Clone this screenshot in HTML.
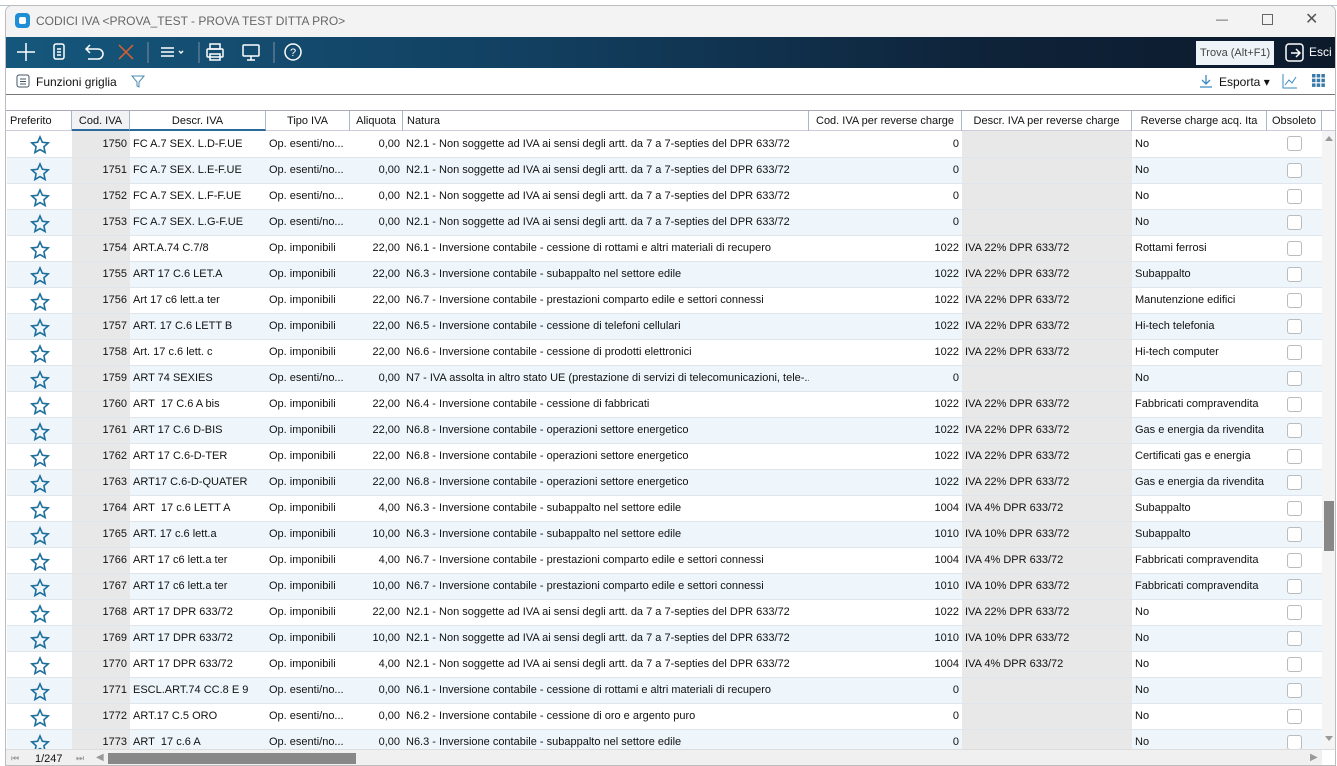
<!DOCTYPE html>
<html><head><meta charset="utf-8">
<style>
*{box-sizing:border-box;margin:0;padding:0}
body{width:1337px;height:766px;overflow:hidden;background:#fff;font-family:"Liberation Sans",sans-serif;font-size:11px;color:#111;position:relative}
.top{position:absolute;left:0;top:0;width:1337px;height:6px;background:#fff;border-bottom:1px solid #b8c4d0}
.win{position:absolute;left:5px;top:5px;width:1331px;height:761px;border:1px solid #bcbcbc;border-radius:7px 7px 0 0;background:#fff;overflow:hidden}
.title{position:absolute;left:0;top:0;width:100%;height:31px;background:#f3f3f3;color:#666;font-size:12px}
.title .t{position:absolute;left:30px;top:8px}
.logo{position:absolute;left:9px;top:7px;width:15px;height:15px;background:#1e8fd6;border-radius:4px}
.logo:after{content:"";position:absolute;left:4px;top:4px;width:7px;height:7px;background:#fff;border-radius:2px}
.tb{position:absolute;left:0;top:31px;width:100%;height:31px;background:linear-gradient(90deg,#15577c 0%,#123f60 40%,#0e2238 75%,#0c1a2c 100%)}
.tb svg{position:absolute}
.trova{position:absolute;left:1190px;top:4px;width:78px;height:24px;background:#eef4f8;color:#444;font-size:11px;padding:6px 0 0 4px;white-space:nowrap;overflow:hidden}
.esci{position:absolute;left:1303px;top:8px;color:#fff;font-size:12px}
.sub{position:absolute;left:0;top:62px;width:100%;height:27px;border-bottom:1px solid #777;font-size:12px}
.hdr{position:absolute;left:0;top:104px;height:21px;width:1331px;border-top:1px solid #aab;border-bottom:1px solid #ccd;background:#fff}
.hdr div{position:absolute;top:0;height:20px;border-right:1px solid #a9b8c8;padding-top:4px;text-align:center;font-size:11px;white-space:nowrap;overflow:hidden}
table{position:absolute;left:1px;top:125px;border-collapse:collapse;table-layout:fixed;width:1315px}
td{height:26px;border-bottom:1px solid #dfe5ea;white-space:nowrap;overflow:hidden;padding:0 3px;font-size:11px}
tr:nth-child(even) td{background:#eef6fc}
td.g{background:#e8e8e8!important}
td.r{text-align:right}
td.c{text-align:center}
td.c svg{vertical-align:middle;margin-top:3px}
.cb{display:inline-block;width:15px;height:15px;border:1px solid #bbb;border-radius:3px;background:#fff;vertical-align:middle}
.sb{position:absolute;left:1316px;top:125px;width:15px;height:618px;background:#f4f4f4}
.bot{position:absolute;left:0;top:743px;width:1331px;height:18px;background:#f0f0f0;border-top:1px solid #ddd}
</style></head><body>
<div class="top"></div>
<div class="win">
<div class="title"><div class="logo"></div><div class="t">CODICI IVA &lt;PROVA_TEST - PROVA TEST DITTA PRO&gt;</div>
<span style="position:absolute;left:1210px;top:6px;color:#555">—</span>
<span style="position:absolute;left:1256px;top:8px;width:11px;height:11px;border:1px solid #666"></span>
<span style="position:absolute;left:1299px;top:3px;font-size:16px;color:#555">✕</span></div>
<div class="tb">
<svg width="300" height="31" viewBox="0 0 300 31" fill="none" stroke="#fff" stroke-width="1.5">
<path d="M20 6v18M11 15h18"/>
<rect x="48" y="7" width="10" height="15" rx="2"/><path d="M51 12h4M51 15h4M51 18h4"/>
<path d="M80 12h12a5 5 0 010 10H82M84 8l-4 4 4 4"/>
<path d="M113 8l14 14M127 8l-14 14" stroke="#e0602c"/>
<path d="M142 5v21" stroke="#5a7a90"/>
<path d="M155 11h13M155 15h13M155 19h13"/><path d="M173 14l2 2 2-2" />
<path d="M193 5v21" stroke="#5a7a90"/>
<rect x="201" y="12" width="16" height="8" rx="1"/><rect x="204" y="7" width="10" height="5"/><rect x="204" y="17" width="10" height="6"/>
<rect x="237" y="8" width="16" height="11" rx="1"/><path d="M241 23h8M245 19v4"/>
<path d="M268 5v21" stroke="#5a7a90"/>
<circle cx="287" cy="15" r="8"/><text x="284" y="19" fill="#fff" stroke="none" font-size="11" font-family="Liberation Sans">?</text>
</svg>
<div class="trova">Trova (Alt+F1)</div>
<svg style="left:1279px;top:6px" width="20" height="20" fill="none" stroke="#fff" stroke-width="1.5"><rect x="1" y="1" width="17" height="17" rx="3"/><path d="M6 10h9M11 6l4 4-4 4"/></svg>
<div class="esci">Esci</div>
</div>
<div class="sub">
<svg style="position:absolute;left:10px;top:6px" width="14" height="14" fill="none" stroke="#456"><rect x="1" y="1" width="12" height="12" rx="2"/><path d="M4 5h6M4 7.5h6M4 10h6"/></svg>
<span style="position:absolute;left:30px;top:7px">Funzioni griglia</span>
<svg style="position:absolute;left:125px;top:6px" width="14" height="14" fill="none" stroke="#4a8cb0"><path d="M1 2h12l-5 6v5l-2-1V8z"/></svg>
<svg style="position:absolute;left:1193px;top:6px" width="14" height="14" fill="none" stroke="#3a8ac0" stroke-width="1.3"><path d="M7 1v9M3 6l4 4 4-4M1 13h12"/></svg>
<span style="position:absolute;left:1213px;top:7px">Esporta ▾</span>
<svg style="position:absolute;left:1276px;top:5px" width="16" height="16" fill="none" stroke="#3a8ac0"><path d="M1 1v14h14M3 12l4-5 3 3 4-6"/></svg>
<svg style="position:absolute;left:1306px;top:6px" width="13" height="13" fill="#3a7aa8"><rect x="0" y="0" width="3.5" height="3.5"/><rect x="4.7" y="0" width="3.5" height="3.5"/><rect x="9.4" y="0" width="3.5" height="3.5"/><rect x="0" y="4.7" width="3.5" height="3.5"/><rect x="4.7" y="4.7" width="3.5" height="3.5"/><rect x="9.4" y="4.7" width="3.5" height="3.5"/><rect x="0" y="9.4" width="3.5" height="3.5"/><rect x="4.7" y="9.4" width="3.5" height="3.5"/><rect x="9.4" y="9.4" width="3.5" height="3.5"/></svg>
</div>
<div class="hdr">
<div style="left:0;width:66px;text-align:left;padding-left:4px">Preferito</div>
<div style="left:66px;width:58px;background:#f0f2f4;border-bottom:2px solid #2a6a9a">Cod. IVA</div>
<div style="left:124px;width:136px;border-bottom:2px solid #2a6a9a">Descr. IVA</div>
<div style="left:260px;width:84px">Tipo IVA</div>
<div style="left:344px;width:53px">Aliquota</div>
<div style="left:397px;width:406px;text-align:left;padding-left:4px">Natura</div>
<div style="left:803px;width:153px">Cod. IVA per reverse charge</div>
<div style="left:956px;width:170px">Descr. IVA per reverse charge</div>
<div style="left:1126px;width:135px">Reverse charge acq. Ita</div>
<div style="left:1261px;width:55px">Obsoleto</div>
</div>
<table>
<colgroup><col style="width:65px"><col style="width:58px"><col style="width:136px"><col style="width:84px"><col style="width:53px"><col style="width:406px"><col style="width:153px"><col style="width:170px"><col style="width:135px"><col style="width:55px"></colgroup>
<tbody>
<tr><td class="c"><svg width="20" height="20"><path d="M10 2l2.4 5.3 5.8.6-4.3 3.9 1.2 5.7L10 14.6l-5.1 2.9 1.2-5.7L1.8 7.9l5.8-.6z" fill="none" stroke="#1f6f9c" stroke-width="1.6"/></svg></td><td class="g r">1750</td><td>FC A.7 SEX. L.D-F.UE</td><td>Op. esenti/no...</td><td class="r">0,00</td><td>N2.1 - Non soggette ad IVA ai sensi degli artt. da 7 a 7-septies del DPR 633/72</td><td class="r">0</td><td class="g"></td><td>No</td><td class="c"><span class="cb"></span></td></tr>
<tr><td class="c"><svg width="20" height="20"><path d="M10 2l2.4 5.3 5.8.6-4.3 3.9 1.2 5.7L10 14.6l-5.1 2.9 1.2-5.7L1.8 7.9l5.8-.6z" fill="none" stroke="#1f6f9c" stroke-width="1.6"/></svg></td><td class="g r">1751</td><td>FC A.7 SEX. L.E-F.UE</td><td>Op. esenti/no...</td><td class="r">0,00</td><td>N2.1 - Non soggette ad IVA ai sensi degli artt. da 7 a 7-septies del DPR 633/72</td><td class="r">0</td><td class="g"></td><td>No</td><td class="c"><span class="cb"></span></td></tr>
<tr><td class="c"><svg width="20" height="20"><path d="M10 2l2.4 5.3 5.8.6-4.3 3.9 1.2 5.7L10 14.6l-5.1 2.9 1.2-5.7L1.8 7.9l5.8-.6z" fill="none" stroke="#1f6f9c" stroke-width="1.6"/></svg></td><td class="g r">1752</td><td>FC A.7 SEX. L.F-F.UE</td><td>Op. esenti/no...</td><td class="r">0,00</td><td>N2.1 - Non soggette ad IVA ai sensi degli artt. da 7 a 7-septies del DPR 633/72</td><td class="r">0</td><td class="g"></td><td>No</td><td class="c"><span class="cb"></span></td></tr>
<tr><td class="c"><svg width="20" height="20"><path d="M10 2l2.4 5.3 5.8.6-4.3 3.9 1.2 5.7L10 14.6l-5.1 2.9 1.2-5.7L1.8 7.9l5.8-.6z" fill="none" stroke="#1f6f9c" stroke-width="1.6"/></svg></td><td class="g r">1753</td><td>FC A.7 SEX. L.G-F.UE</td><td>Op. esenti/no...</td><td class="r">0,00</td><td>N2.1 - Non soggette ad IVA ai sensi degli artt. da 7 a 7-septies del DPR 633/72</td><td class="r">0</td><td class="g"></td><td>No</td><td class="c"><span class="cb"></span></td></tr>
<tr><td class="c"><svg width="20" height="20"><path d="M10 2l2.4 5.3 5.8.6-4.3 3.9 1.2 5.7L10 14.6l-5.1 2.9 1.2-5.7L1.8 7.9l5.8-.6z" fill="none" stroke="#1f6f9c" stroke-width="1.6"/></svg></td><td class="g r">1754</td><td>ART.A.74 C.7/8</td><td>Op. imponibili</td><td class="r">22,00</td><td>N6.1 - Inversione contabile - cessione di rottami e altri materiali di recupero</td><td class="r">1022</td><td class="g">IVA 22% DPR 633/72</td><td>Rottami ferrosi</td><td class="c"><span class="cb"></span></td></tr>
<tr><td class="c"><svg width="20" height="20"><path d="M10 2l2.4 5.3 5.8.6-4.3 3.9 1.2 5.7L10 14.6l-5.1 2.9 1.2-5.7L1.8 7.9l5.8-.6z" fill="none" stroke="#1f6f9c" stroke-width="1.6"/></svg></td><td class="g r">1755</td><td>ART 17 C.6 LET.A</td><td>Op. imponibili</td><td class="r">22,00</td><td>N6.3 - Inversione contabile - subappalto nel settore edile</td><td class="r">1022</td><td class="g">IVA 22% DPR 633/72</td><td>Subappalto</td><td class="c"><span class="cb"></span></td></tr>
<tr><td class="c"><svg width="20" height="20"><path d="M10 2l2.4 5.3 5.8.6-4.3 3.9 1.2 5.7L10 14.6l-5.1 2.9 1.2-5.7L1.8 7.9l5.8-.6z" fill="none" stroke="#1f6f9c" stroke-width="1.6"/></svg></td><td class="g r">1756</td><td>Art 17 c6 lett.a ter</td><td>Op. imponibili</td><td class="r">22,00</td><td>N6.7 - Inversione contabile - prestazioni comparto edile e settori connessi</td><td class="r">1022</td><td class="g">IVA 22% DPR 633/72</td><td>Manutenzione edifici</td><td class="c"><span class="cb"></span></td></tr>
<tr><td class="c"><svg width="20" height="20"><path d="M10 2l2.4 5.3 5.8.6-4.3 3.9 1.2 5.7L10 14.6l-5.1 2.9 1.2-5.7L1.8 7.9l5.8-.6z" fill="none" stroke="#1f6f9c" stroke-width="1.6"/></svg></td><td class="g r">1757</td><td>ART. 17 C.6 LETT B</td><td>Op. imponibili</td><td class="r">22,00</td><td>N6.5 - Inversione contabile - cessione di telefoni cellulari</td><td class="r">1022</td><td class="g">IVA 22% DPR 633/72</td><td>Hi-tech telefonia</td><td class="c"><span class="cb"></span></td></tr>
<tr><td class="c"><svg width="20" height="20"><path d="M10 2l2.4 5.3 5.8.6-4.3 3.9 1.2 5.7L10 14.6l-5.1 2.9 1.2-5.7L1.8 7.9l5.8-.6z" fill="none" stroke="#1f6f9c" stroke-width="1.6"/></svg></td><td class="g r">1758</td><td>Art. 17 c.6 lett. c</td><td>Op. imponibili</td><td class="r">22,00</td><td>N6.6 - Inversione contabile - cessione di prodotti elettronici</td><td class="r">1022</td><td class="g">IVA 22% DPR 633/72</td><td>Hi-tech computer</td><td class="c"><span class="cb"></span></td></tr>
<tr><td class="c"><svg width="20" height="20"><path d="M10 2l2.4 5.3 5.8.6-4.3 3.9 1.2 5.7L10 14.6l-5.1 2.9 1.2-5.7L1.8 7.9l5.8-.6z" fill="none" stroke="#1f6f9c" stroke-width="1.6"/></svg></td><td class="g r">1759</td><td>ART 74 SEXIES</td><td>Op. esenti/no...</td><td class="r">0,00</td><td>N7 - IVA assolta in altro stato UE (prestazione di servizi di telecomunicazioni, tele-...</td><td class="r">0</td><td class="g"></td><td>No</td><td class="c"><span class="cb"></span></td></tr>
<tr><td class="c"><svg width="20" height="20"><path d="M10 2l2.4 5.3 5.8.6-4.3 3.9 1.2 5.7L10 14.6l-5.1 2.9 1.2-5.7L1.8 7.9l5.8-.6z" fill="none" stroke="#1f6f9c" stroke-width="1.6"/></svg></td><td class="g r">1760</td><td>ART&nbsp; 17 C.6 A bis</td><td>Op. imponibili</td><td class="r">22,00</td><td>N6.4 - Inversione contabile - cessione di fabbricati</td><td class="r">1022</td><td class="g">IVA 22% DPR 633/72</td><td>Fabbricati compravendita</td><td class="c"><span class="cb"></span></td></tr>
<tr><td class="c"><svg width="20" height="20"><path d="M10 2l2.4 5.3 5.8.6-4.3 3.9 1.2 5.7L10 14.6l-5.1 2.9 1.2-5.7L1.8 7.9l5.8-.6z" fill="none" stroke="#1f6f9c" stroke-width="1.6"/></svg></td><td class="g r">1761</td><td>ART 17 C.6 D-BIS</td><td>Op. imponibili</td><td class="r">22,00</td><td>N6.8 - Inversione contabile - operazioni settore energetico</td><td class="r">1022</td><td class="g">IVA 22% DPR 633/72</td><td>Gas e energia da rivendita</td><td class="c"><span class="cb"></span></td></tr>
<tr><td class="c"><svg width="20" height="20"><path d="M10 2l2.4 5.3 5.8.6-4.3 3.9 1.2 5.7L10 14.6l-5.1 2.9 1.2-5.7L1.8 7.9l5.8-.6z" fill="none" stroke="#1f6f9c" stroke-width="1.6"/></svg></td><td class="g r">1762</td><td>ART 17 C.6-D-TER</td><td>Op. imponibili</td><td class="r">22,00</td><td>N6.8 - Inversione contabile - operazioni settore energetico</td><td class="r">1022</td><td class="g">IVA 22% DPR 633/72</td><td>Certificati gas e energia</td><td class="c"><span class="cb"></span></td></tr>
<tr><td class="c"><svg width="20" height="20"><path d="M10 2l2.4 5.3 5.8.6-4.3 3.9 1.2 5.7L10 14.6l-5.1 2.9 1.2-5.7L1.8 7.9l5.8-.6z" fill="none" stroke="#1f6f9c" stroke-width="1.6"/></svg></td><td class="g r">1763</td><td>ART17 C.6-D-QUATER</td><td>Op. imponibili</td><td class="r">22,00</td><td>N6.8 - Inversione contabile - operazioni settore energetico</td><td class="r">1022</td><td class="g">IVA 22% DPR 633/72</td><td>Gas e energia da rivendita</td><td class="c"><span class="cb"></span></td></tr>
<tr><td class="c"><svg width="20" height="20"><path d="M10 2l2.4 5.3 5.8.6-4.3 3.9 1.2 5.7L10 14.6l-5.1 2.9 1.2-5.7L1.8 7.9l5.8-.6z" fill="none" stroke="#1f6f9c" stroke-width="1.6"/></svg></td><td class="g r">1764</td><td>ART&nbsp; 17 c.6 LETT A</td><td>Op. imponibili</td><td class="r">4,00</td><td>N6.3 - Inversione contabile - subappalto nel settore edile</td><td class="r">1004</td><td class="g">IVA 4% DPR 633/72</td><td>Subappalto</td><td class="c"><span class="cb"></span></td></tr>
<tr><td class="c"><svg width="20" height="20"><path d="M10 2l2.4 5.3 5.8.6-4.3 3.9 1.2 5.7L10 14.6l-5.1 2.9 1.2-5.7L1.8 7.9l5.8-.6z" fill="none" stroke="#1f6f9c" stroke-width="1.6"/></svg></td><td class="g r">1765</td><td>ART. 17 c.6 lett.a</td><td>Op. imponibili</td><td class="r">10,00</td><td>N6.3 - Inversione contabile - subappalto nel settore edile</td><td class="r">1010</td><td class="g">IVA 10% DPR 633/72</td><td>Subappalto</td><td class="c"><span class="cb"></span></td></tr>
<tr><td class="c"><svg width="20" height="20"><path d="M10 2l2.4 5.3 5.8.6-4.3 3.9 1.2 5.7L10 14.6l-5.1 2.9 1.2-5.7L1.8 7.9l5.8-.6z" fill="none" stroke="#1f6f9c" stroke-width="1.6"/></svg></td><td class="g r">1766</td><td>ART 17 c6 lett.a ter</td><td>Op. imponibili</td><td class="r">4,00</td><td>N6.7 - Inversione contabile - prestazioni comparto edile e settori connessi</td><td class="r">1004</td><td class="g">IVA 4% DPR 633/72</td><td>Fabbricati compravendita</td><td class="c"><span class="cb"></span></td></tr>
<tr><td class="c"><svg width="20" height="20"><path d="M10 2l2.4 5.3 5.8.6-4.3 3.9 1.2 5.7L10 14.6l-5.1 2.9 1.2-5.7L1.8 7.9l5.8-.6z" fill="none" stroke="#1f6f9c" stroke-width="1.6"/></svg></td><td class="g r">1767</td><td>ART 17 c6 lett.a ter</td><td>Op. imponibili</td><td class="r">10,00</td><td>N6.7 - Inversione contabile - prestazioni comparto edile e settori connessi</td><td class="r">1010</td><td class="g">IVA 10% DPR 633/72</td><td>Fabbricati compravendita</td><td class="c"><span class="cb"></span></td></tr>
<tr><td class="c"><svg width="20" height="20"><path d="M10 2l2.4 5.3 5.8.6-4.3 3.9 1.2 5.7L10 14.6l-5.1 2.9 1.2-5.7L1.8 7.9l5.8-.6z" fill="none" stroke="#1f6f9c" stroke-width="1.6"/></svg></td><td class="g r">1768</td><td>ART 17 DPR 633/72</td><td>Op. imponibili</td><td class="r">22,00</td><td>N2.1 - Non soggette ad IVA ai sensi degli artt. da 7 a 7-septies del DPR 633/72</td><td class="r">1022</td><td class="g">IVA 22% DPR 633/72</td><td>No</td><td class="c"><span class="cb"></span></td></tr>
<tr><td class="c"><svg width="20" height="20"><path d="M10 2l2.4 5.3 5.8.6-4.3 3.9 1.2 5.7L10 14.6l-5.1 2.9 1.2-5.7L1.8 7.9l5.8-.6z" fill="none" stroke="#1f6f9c" stroke-width="1.6"/></svg></td><td class="g r">1769</td><td>ART 17 DPR 633/72</td><td>Op. imponibili</td><td class="r">10,00</td><td>N2.1 - Non soggette ad IVA ai sensi degli artt. da 7 a 7-septies del DPR 633/72</td><td class="r">1010</td><td class="g">IVA 10% DPR 633/72</td><td>No</td><td class="c"><span class="cb"></span></td></tr>
<tr><td class="c"><svg width="20" height="20"><path d="M10 2l2.4 5.3 5.8.6-4.3 3.9 1.2 5.7L10 14.6l-5.1 2.9 1.2-5.7L1.8 7.9l5.8-.6z" fill="none" stroke="#1f6f9c" stroke-width="1.6"/></svg></td><td class="g r">1770</td><td>ART 17 DPR 633/72</td><td>Op. imponibili</td><td class="r">4,00</td><td>N2.1 - Non soggette ad IVA ai sensi degli artt. da 7 a 7-septies del DPR 633/72</td><td class="r">1004</td><td class="g">IVA 4% DPR 633/72</td><td>No</td><td class="c"><span class="cb"></span></td></tr>
<tr><td class="c"><svg width="20" height="20"><path d="M10 2l2.4 5.3 5.8.6-4.3 3.9 1.2 5.7L10 14.6l-5.1 2.9 1.2-5.7L1.8 7.9l5.8-.6z" fill="none" stroke="#1f6f9c" stroke-width="1.6"/></svg></td><td class="g r">1771</td><td>ESCL.ART.74 CC.8 E 9</td><td>Op. esenti/no...</td><td class="r">0,00</td><td>N6.1 - Inversione contabile - cessione di rottami e altri materiali di recupero</td><td class="r">0</td><td class="g"></td><td>No</td><td class="c"><span class="cb"></span></td></tr>
<tr><td class="c"><svg width="20" height="20"><path d="M10 2l2.4 5.3 5.8.6-4.3 3.9 1.2 5.7L10 14.6l-5.1 2.9 1.2-5.7L1.8 7.9l5.8-.6z" fill="none" stroke="#1f6f9c" stroke-width="1.6"/></svg></td><td class="g r">1772</td><td>ART.17 C.5 ORO</td><td>Op. esenti/no...</td><td class="r">0,00</td><td>N6.2 - Inversione contabile - cessione di oro e argento puro</td><td class="r">0</td><td class="g"></td><td>No</td><td class="c"><span class="cb"></span></td></tr>
<tr><td class="c"><svg width="20" height="20"><path d="M10 2l2.4 5.3 5.8.6-4.3 3.9 1.2 5.7L10 14.6l-5.1 2.9 1.2-5.7L1.8 7.9l5.8-.6z" fill="none" stroke="#1f6f9c" stroke-width="1.6"/></svg></td><td class="g r">1773</td><td>ART&nbsp; 17 c.6 A</td><td>Op. esenti/no...</td><td class="r">0,00</td><td>N6.3 - Inversione contabile - subappalto nel settore edile</td><td class="r">0</td><td class="g"></td><td>No</td><td class="c"><span class="cb"></span></td></tr>
</tbody></table>
<div class="sb">
<span style="position:absolute;left:3px;top:5px;border:4px solid transparent;border-bottom:5px solid #999;border-top:0"></span>
<div style="position:absolute;left:2px;top:370px;width:10px;height:50px;background:#888"></div>
<span style="position:absolute;left:3px;top:605px;border:4px solid transparent;border-top:5px solid #999;border-bottom:0"></span>
</div>
<div class="bot">
<span style="position:absolute;left:5px;top:3px;color:#999;font-size:9px">⏮</span>
<span style="position:absolute;left:29px;top:3px;font-size:11px">1/247</span>
<span style="position:absolute;left:70px;top:3px;color:#999;font-size:9px">⏭</span>
<span style="position:absolute;left:90px;top:2px;color:#999;font-size:10px">◀</span>
<div style="position:absolute;left:102px;top:3px;width:248px;height:11px;background:#888"></div>
<span style="position:absolute;left:1304px;top:2px;color:#999;font-size:10px">▶</span>
<div style="position:absolute;left:1316px;top:0;width:15px;height:18px;background:#fff"></div>
</div>
</div>
</body></html>
